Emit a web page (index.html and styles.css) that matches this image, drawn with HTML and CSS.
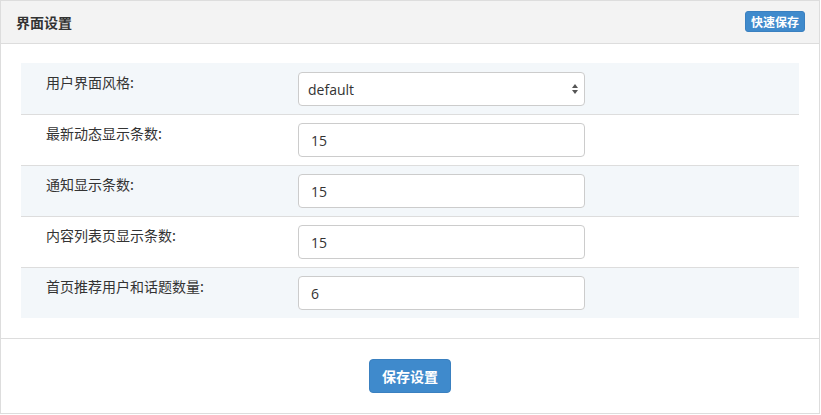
FILE: index.html
```html
<!DOCTYPE html>
<html lang="zh">
<head>
<meta charset="utf-8">
<title>界面设置</title>
<link rel="stylesheet" href="styles.css">
</head>
<body>
<div class="panel">
  <div class="panel-heading">
    <span class="panel-title">界面设置</span>
    <button class="btn btn-xs">快速保存</button>
  </div>
  <div class="panel-body">
    <div class="settings">
      <div class="row">
        <label class="label">用户界面风格:</label>
        <div class="field">
          <div class="select">
            <span>default</span>
            <svg class="arrows" width="8" height="12" viewBox="0 0 8 12"><path d="M4 1 L7 5 L1 5 Z M4 11 L7 7 L1 7 Z" fill="#555"/></svg>
          </div>
        </div>
      </div>
      <div class="row">
        <label class="label">最新动态显示条数:</label>
        <div class="field"><input class="input" type="text" value="15"></div>
      </div>
      <div class="row">
        <label class="label">通知显示条数:</label>
        <div class="field"><input class="input" type="text" value="15"></div>
      </div>
      <div class="row">
        <label class="label">内容列表页显示条数:</label>
        <div class="field"><input class="input" type="text" value="15"></div>
      </div>
      <div class="row">
        <label class="label">首页推荐用户和话题数量:</label>
        <div class="field"><input class="input" type="text" value="6"></div>
      </div>
    </div>
  </div>
  <div class="panel-footer">
    <button class="btn btn-md">保存设置</button>
  </div>
</div>
</body>
</html>
```
FILE: styles.css
```css
* { box-sizing: border-box; }
html, body { margin: 0; padding: 0; background: #fff; }
body {
  font-family: "Noto Sans CJK SC", "Liberation Sans", sans-serif;
  color: #333;
  font-size: 14px;
}
.panel {
  width: 820px;
  height: 414px;
  border: 1px solid #ddd;
  display: flex;
  flex-direction: column;
}
.panel-heading {
  height: 43px;
  background: #f3f3f3;
  border-bottom: 1px solid #ddd;
  display: flex;
  align-items: center;
  justify-content: space-between;
  padding: 0 14px 0 15px;
}
.panel-title {
  font-size: 14px;
  font-weight: bold;
  color: #333;
  line-height: 20px;
  padding-bottom: 1px;
}
.btn {
  background: #3f8acc;
  color: #fff;
  border: 1px solid #3a80c0;
  border-radius: 3px;
  font-family: "Noto Sans CJK SC", sans-serif;
  font-weight: bold;
  cursor: pointer;
  padding: 0;
}
.btn-xs {
  width: 60px;
  height: 21px;
  font-size: 12px;
  line-height: 19px;
  margin-top: -1px;
}
.btn-md {
  width: 82px;
  height: 34px;
  font-size: 14px;
  line-height: 32px;
  border-radius: 4px;
}
.panel-body {
  padding: 19px 20px 20px;
  border-bottom: 1px solid #ddd;
}
.settings {
  display: flex;
  flex-direction: column;
}
.row {
  display: grid;
  grid-template-columns: 277px 287px;
  height: 51px;
  border-top: 1px solid #ddd;
  padding: 8px 0;
}
.row:first-child {
  border-top-color: transparent;
}
.row:nth-child(odd) { background: #f3f7fa; }
.label {
  padding-left: 25px;
  font-size: 14px;
  line-height: 20px;
  color: #333;
}
.field { display: flex; }
.input, .select {
  width: 287px;
  height: 34px;
  border: 1px solid #ccc;
  border-radius: 4px;
  background: #fff;
  font-family: "Open Sans", "DejaVu Sans", sans-serif;
  font-size: 14px;
  color: #333;
  padding: 0 12px;
  outline: none;
}
.select {
  display: flex;
  align-items: center;
  justify-content: space-between;
  padding: 0 5px 0 9px;
}
.arrows { display: block; }
.panel-footer {
  flex: 1;
  display: flex;
  justify-content: center;
  padding-top: 20px;
}
```
